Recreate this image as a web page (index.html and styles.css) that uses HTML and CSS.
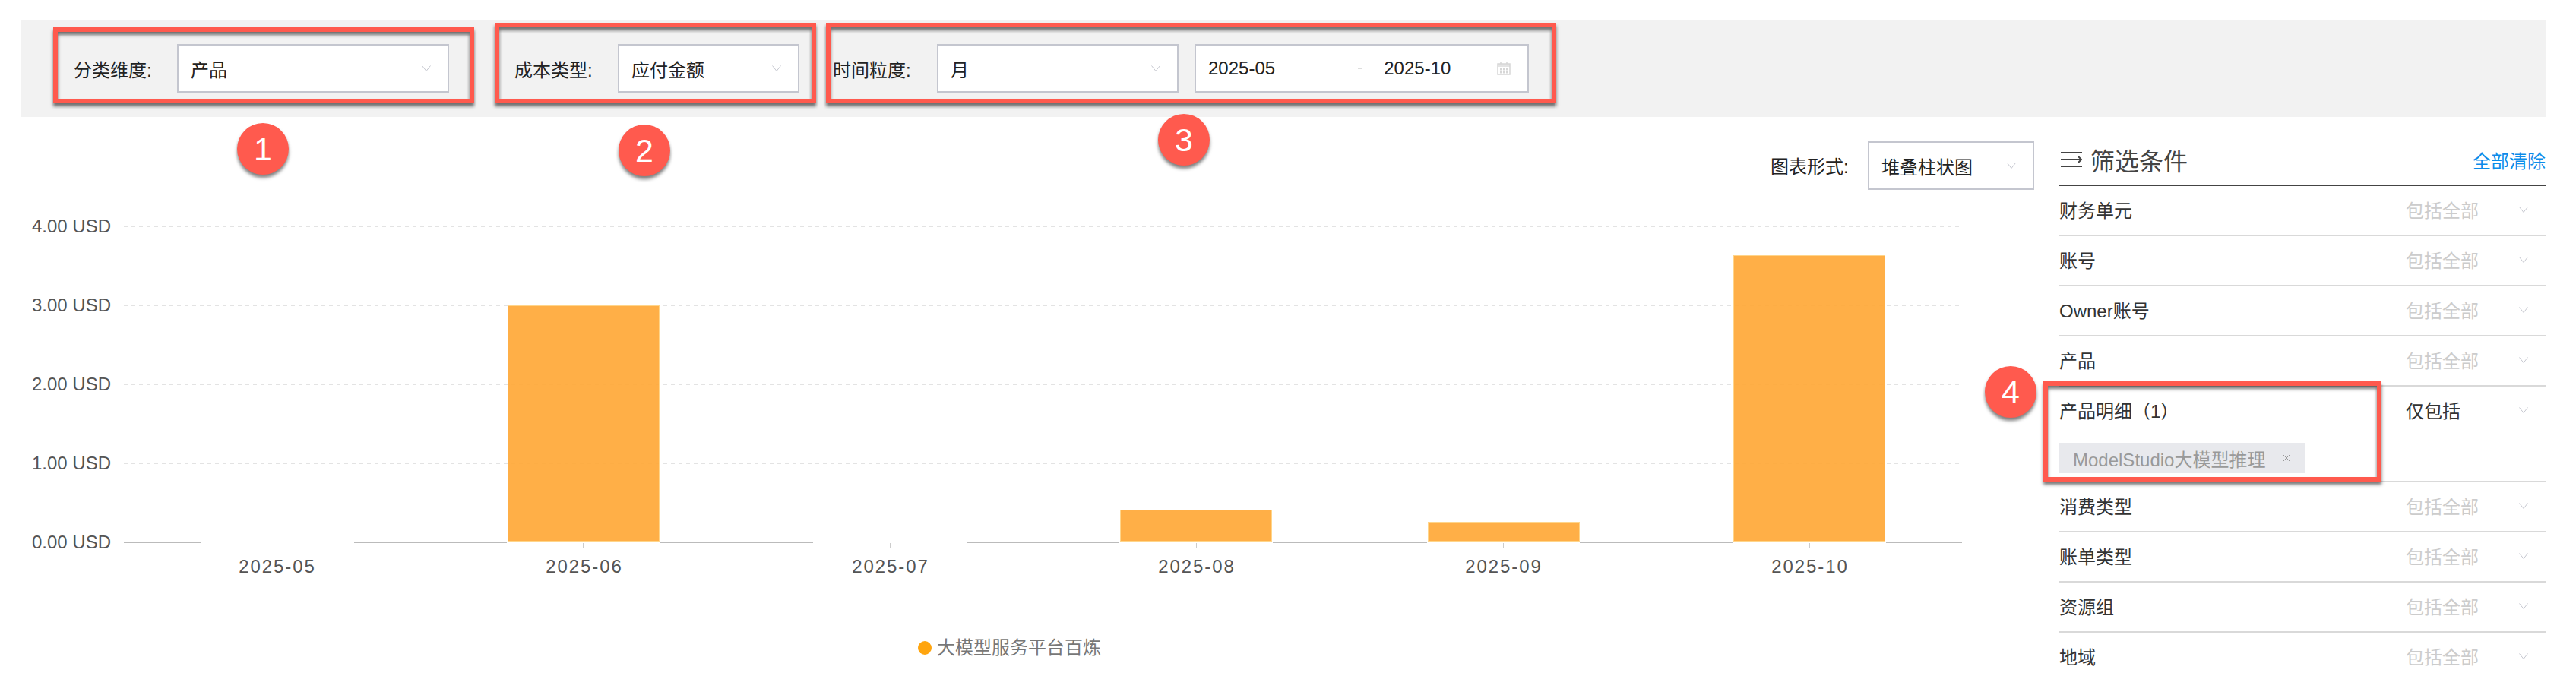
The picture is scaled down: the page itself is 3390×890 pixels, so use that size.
FILE: index.html
```html
<!DOCTYPE html>
<html lang="zh-CN">
<head>
    <meta charset="UTF-8">
    <title>成本分析</title>
    <link rel="stylesheet" href="styles.css">
</head>
<body>
    <div class="toolbar">
        <span class="field-label">分类维度:</span>
        <div class="select select-dimension">
            <span>产品</span>
            <svg class="chevron" viewBox="0 0 12 8"><path d="M.5.5 6 7.5 11.5.5"/></svg>
        </div>
        <span class="field-label cost-label">成本类型:</span>
        <div class="select select-cost">
            <span>应付金额</span>
            <svg class="chevron" viewBox="0 0 12 8"><path d="M.5.5 6 7.5 11.5.5"/></svg>
        </div>
        <span class="field-label time-label">时间粒度:</span>
        <div class="select select-time">
            <span>月</span>
            <svg class="chevron" viewBox="0 0 12 8"><path d="M.5.5 6 7.5 11.5.5"/></svg>
        </div>
        <div class="select date-range">
            <span class="date-from">2025-05</span>
            <span class="date-dash"></span>
            <span class="date-to">2025-10</span>
            <svg class="calendar" viewBox="0 0 18 18">
                <path class="calendar-head" d="M1 3h16v4H1z"/>
                <path class="calendar-frame" d="M1 3h16v14H1zM5 .5V3M13 .5V3"/>
                <path class="calendar-dots" d="M4 9h2.500v2.500H4zM8 9h2.500v2.500H8zM12 9h2.500v2.500H12zM4 13h2.500v2.500H4zM8 13h2.500v2.500H8zM12 13h2.500v2.500H12z"/>
            </svg>
        </div>
    </div>

    <div class="main">
        <div class="chart-area">
            <div class="chart-type">
                <span class="chart-type-label">图表形式:</span>
                <div class="select select-chart">
                    <span>堆叠柱状图</span>
                    <svg class="chevron" viewBox="0 0 12 8"><path d="M.5.5 6 7.5 11.5.5"/></svg>
                </div>
            </div>
            <svg class="chart" viewBox="0 250 2710 640">
                <g class="grid">
                    <line x1="163" x2="2582" y1="298" y2="298"/>
                    <line x1="163" x2="2582" y1="402" y2="402"/>
                    <line x1="163" x2="2582" y1="506" y2="506"/>
                    <line x1="163" x2="2582" y1="610" y2="610"/>
                </g>
                <g class="baseline">
                    <line x1="163" x2="264" y1="714" y2="714"/>
                    <line x1="466" x2="667" y1="714" y2="714"/>
                    <line x1="869" x2="1070" y1="714" y2="714"/>
                    <line x1="1272" x2="1473" y1="714" y2="714"/>
                    <line x1="1675" x2="1878" y1="714" y2="714"/>
                    <line x1="2079" x2="2280" y1="714" y2="714"/>
                    <line x1="2482" x2="2582" y1="714" y2="714"/>
                </g>
                <g class="ticks">
                    <line x1="364.500" x2="364.500" y1="715" y2="722"/>
                    <line x1="767.500" x2="767.500" y1="715" y2="722"/>
                    <line x1="1171.500" x2="1171.500" y1="715" y2="722"/>
                    <line x1="1574.500" x2="1574.500" y1="715" y2="722"/>
                    <line x1="1978.500" x2="1978.500" y1="715" y2="722"/>
                    <line x1="2381.500" x2="2381.500" y1="715" y2="722"/>
                </g>
                <g class="bars">
                    <rect x="668.500" y="402.500" width="199" height="310"/>
                    <rect x="1474.500" y="671.500" width="199" height="41"/>
                    <rect x="1879.500" y="687.500" width="199" height="25"/>
                    <rect x="2281.500" y="336.500" width="199" height="376"/>
                </g>
                <g class="y-labels">
                    <text x="146" y="306">4.00 USD</text>
                    <text x="146" y="410">3.00 USD</text>
                    <text x="146" y="514">2.00 USD</text>
                    <text x="146" y="618">1.00 USD</text>
                    <text x="146" y="722">0.00 USD</text>
                </g>
                <g class="x-labels">
                    <text x="365" y="754">2025-05</text>
                    <text x="769" y="754">2025-06</text>
                    <text x="1172" y="754">2025-07</text>
                    <text x="1575" y="754">2025-08</text>
                    <text x="1979" y="754">2025-09</text>
                    <text x="2382" y="754">2025-10</text>
                </g>
                <circle class="legend-dot" cx="1217" cy="853" r="9"/>
                <text class="legend-text" x="1233" y="861">大模型服务平台百炼</text>
            </svg>
        </div>

        <div class="filters">
            <div class="filters-head">
                <svg class="filter-icon" viewBox="0 0 28 20">
                    <path d="M0 1h28M0 10h27M0 19h28M23 6l4 4-4 4"/>
                </svg>
                <span class="filters-title">筛选条件</span>
                <span class="clear-all">全部清除</span>
            </div>
            <div class="filter-row">
                <div class="row-head"><span class="row-name">财务单元</span><span class="row-value">包括全部</span><svg class="chevron" viewBox="0 0 12 8"><path d="M.5.5 6 7.5 11.5.5"/></svg></div>
            </div>
            <div class="filter-row">
                <div class="row-head"><span class="row-name">账号</span><span class="row-value">包括全部</span><svg class="chevron" viewBox="0 0 12 8"><path d="M.5.5 6 7.5 11.5.5"/></svg></div>
            </div>
            <div class="filter-row">
                <div class="row-head"><span class="row-name">Owner账号</span><span class="row-value">包括全部</span><svg class="chevron" viewBox="0 0 12 8"><path d="M.5.5 6 7.5 11.5.5"/></svg></div>
            </div>
            <div class="filter-row">
                <div class="row-head"><span class="row-name">产品</span><span class="row-value">包括全部</span><svg class="chevron" viewBox="0 0 12 8"><path d="M.5.5 6 7.5 11.5.5"/></svg></div>
            </div>
            <div class="filter-row">
                <div class="row-head"><span class="row-name">产品明细（1）</span><span class="row-value active">仅包括</span><svg class="chevron" viewBox="0 0 12 8"><path d="M.5.5 6 7.5 11.5.5"/></svg></div>
                <div class="tag">
                    <span>ModelStudio大模型推理</span>
                    <svg class="tag-close" viewBox="0 0 10 10"><path d="M.5.5l9 9M9.500.5l-9 9"/></svg>
                </div>
            </div>
            <div class="filter-row">
                <div class="row-head"><span class="row-name">消费类型</span><span class="row-value">包括全部</span><svg class="chevron" viewBox="0 0 12 8"><path d="M.5.5 6 7.5 11.5.5"/></svg></div>
            </div>
            <div class="filter-row">
                <div class="row-head"><span class="row-name">账单类型</span><span class="row-value">包括全部</span><svg class="chevron" viewBox="0 0 12 8"><path d="M.5.5 6 7.5 11.5.5"/></svg></div>
            </div>
            <div class="filter-row">
                <div class="row-head"><span class="row-name">资源组</span><span class="row-value">包括全部</span><svg class="chevron" viewBox="0 0 12 8"><path d="M.5.5 6 7.5 11.5.5"/></svg></div>
            </div>
            <div class="filter-row">
                <div class="row-head"><span class="row-name">地域</span><span class="row-value">包括全部</span><svg class="chevron" viewBox="0 0 12 8"><path d="M.5.5 6 7.5 11.5.5"/></svg></div>
            </div>
        </div>
    </div>

    <!-- annotations drawn over the page -->
    <div class="mark mark-1"></div>
    <div class="mark mark-2"></div>
    <div class="mark mark-3"></div>
    <div class="mark mark-4"></div>
    <div class="badge badge-1">1</div>
    <div class="badge badge-2">2</div>
    <div class="badge badge-3">3</div>
    <div class="badge badge-4">4</div>
</body>
</html>
```

FILE: styles.css
```css
html, body {
    margin: 0;
    padding: 0;
    height: 890px;
    overflow: hidden;
}
body {
    position: relative;
    background-color: #fff;
    color: #222;
    font-family: "Liberation Sans", "Noto Sans CJK SC", sans-serif;
    font-size: 24px;
}
.toolbar {
    display: flex;
    align-items: center;
    box-sizing: border-box;
    width: 3322px;
    height: 128px;
    margin: 26px 0 0 28px;
    padding: 0 0 0 69px;
    background-color: #f2f2f2;
}
.field-label {
    width: 136px;
    flex: none;
}
.cost-label {
    margin-left: 86px;
}
.time-label {
    width: 137px;
    margin-left: 44px;
}
.select {
    display: flex;
    align-items: center;
    justify-content: space-between;
    box-sizing: border-box;
    height: 64px;
    padding: 0 22px 0 16px;
    background-color: #fff;
    border: 2px solid #c4c6cf;
    flex: none;
}
.select-dimension {
    width: 358px;
}
.select-cost {
    width: 239px;
}
.select-time {
    width: 318px;
}
.select-chart {
    width: 219px;
}
.chevron {
    width: 12px;
    height: 8px;
    flex: none;
    fill: none;
    stroke: #c4c6cf;
    stroke-width: 1;
}
.date-range {
    width: 440px;
    margin-left: 21px;
    justify-content: flex-start;
}
.date-from {
    width: 199px;
}
.date-dash {
    width: 6px;
    height: 2px;
    background-color: #ddd;
}
.date-to {
    width: 150px;
    margin-left: 28px;
}
.calendar {
    width: 18px;
    height: 18px;
    flex: none;
}
.calendar-head {
    fill: #e4e4e4;
}
.calendar-frame {
    fill: none;
    stroke: #d6d6d6;
    stroke-width: 1.5;
}
.calendar-dots {
    fill: #d6d6d6;
}
.main {
    display: flex;
}
.chart-area {
    width: 2710px;
    flex: none;
}
.chart-type {
    display: flex;
    align-items: center;
    justify-content: flex-end;
    box-sizing: border-box;
    height: 96px;
    padding: 32px 33px 0 0;
}
.chart-type-label {
    margin-right: 10px;
    margin-top: -2px;
    width: 118px;
}
.chart {
    display: block;
    width: 2710px;
    height: 640px;
}
.grid line {
    stroke: #e3e3e3;
    stroke-width: 2;
    stroke-dasharray: 5 5;
}
.baseline line {
    stroke: #bbb;
    stroke-width: 2;
}
.ticks line {
    stroke: #ccc;
    stroke-width: 1;
}
.bars rect {
    fill: #ffa633;
    fill-opacity: 0.9;
    stroke: #ffd58a;
    stroke-width: 1;
}
.y-labels text {
    fill: #555;
    font-size: 24px;
    text-anchor: end;
}
.x-labels text {
    fill: #555;
    font-size: 24px;
    letter-spacing: 1.9px;
    text-anchor: middle;
}
.legend-dot {
    fill: #ffa50f;
}
.legend-text {
    fill: #777;
    font-size: 24px;
}
.filters {
    width: 640px;
    flex: none;
    color: #333;
}
.filters-head {
    display: flex;
    align-items: center;
    box-sizing: border-box;
    height: 91px;
    padding-top: 23px;
    border-bottom: 2px solid #444;
}
.filter-icon {
    width: 28px;
    height: 20px;
    margin: 0 11px 0 2px;
    flex: none;
    fill: none;
    stroke: #444;
    stroke-width: 2;
}
.filters-title {
    flex: 1;
    color: #444;
    font-size: 32px;
}
.clear-all {
    color: #0b8cea;
}
.filter-row {
    border-bottom: 2px solid #d9d9d9;
}
.row-head {
    display: flex;
    align-items: center;
    box-sizing: border-box;
    height: 64px;
    padding: 0 23px 3px 0;
}
.row-name {
    flex: 1;
}
.row-value {
    width: 149px;
    color: #ccc;
}
.row-value.active {
    color: #333;
}
.tag {
    display: flex;
    align-items: center;
    box-sizing: border-box;
    width: 324px;
    height: 40px;
    margin: 10px 0;
    padding: 0 20px 0 18px;
    justify-content: space-between;
    background-color: #e8e9ed;
    color: #999;
}
.tag-close {
    width: 10px;
    height: 10px;
    fill: none;
    stroke: #999;
    stroke-width: 1;
}
.mark {
    position: absolute;
    box-sizing: border-box;
    border: 6px solid #ff5a4e;
    box-shadow: 0 4px 4px rgba(0, 0, 0, 0.55), inset 0 4px 4px rgba(0, 0, 0, 0.55);
}
.mark-1 {
    left: 70px;
    top: 36px;
    width: 554px;
    height: 100px;
}
.mark-2 {
    left: 651px;
    top: 30px;
    width: 423px;
    height: 106px;
}
.mark-3 {
    left: 1087px;
    top: 30px;
    width: 961px;
    height: 106px;
}
.mark-4 {
    left: 2689px;
    top: 502px;
    width: 445px;
    height: 132px;
}
.badge {
    position: absolute;
    width: 68px;
    height: 68px;
    border-radius: 50%;
    background-color: #ff5a4e;
    box-shadow: 0 4px 4px rgba(0, 0, 0, 0.5);
    color: #fff;
    font-size: 43px;
    line-height: 68px;
    text-align: center;
}
.badge-1 {
    left: 312px;
    top: 162px;
}
.badge-2 {
    left: 814px;
    top: 164px;
}
.badge-3 {
    left: 1524px;
    top: 150px;
}
.badge-4 {
    left: 2612px;
    top: 482px;
}
```
